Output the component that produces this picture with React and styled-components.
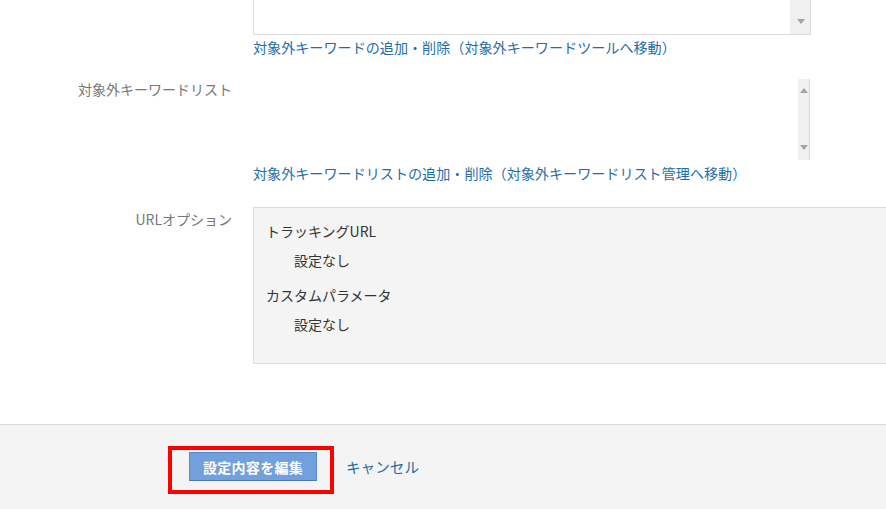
import React from "react";
import styled, { createGlobalStyle } from "styled-components";

const GlobalStyle = createGlobalStyle`
  html, body {
    margin: 0;
    padding: 0;
    background: #ffffff;
    overflow: hidden;
  }
  body {
    font-family: "Noto Sans CJK JP", "Noto Sans", sans-serif;
    font-size: 14px;
    color: #333333;
  }
`;

const Page = styled.div`
  width: 886px;
  height: 509px;
  overflow: hidden;
  display: flex;
  flex-direction: column;
`;

const Form = styled.div`
  display: flex;
  flex-direction: column;
  margin-top: -48px;
`;

const Row = styled.div`
  display: grid;
  grid-template-columns: 253px 1fr;
  margin-top: ${(props) => props.$gap || 0}px;
`;

const Label = styled.div`
  text-align: right;
  padding-right: 21px;
  padding-top: ${(props) => props.$top || 0}px;
  line-height: 20px;
  color: #777777;
  font-size: 14px;
`;

const Field = styled.div`
  display: flex;
  flex-direction: column;
  min-width: 0;
`;

const Textarea = styled.div`
  position: relative;
  width: 558px;
  height: ${(props) => props.$height}px;
  box-sizing: border-box;
  border: 1px solid ${(props) => (props.$bordered ? "#dcdcdc" : "transparent")};
  background: #ffffff;
  display: flex;
  justify-content: flex-end;
`;

const Scrollbar = styled.div`
  width: ${(props) => props.$width}px;
  background: #f0f0f0;
  border-left: 1px solid #f0f0f0;
  border-right: ${(props) => (props.$edge ? "1px solid #dcdcdc" : "none")};
  display: flex;
  flex-direction: column;
  justify-content: space-between;
  align-items: center;
  padding: 9px 0 10px;
  box-sizing: border-box;
`;

const Arrow = styled.span`
  width: 0;
  height: 0;
  border-left: 4px solid transparent;
  border-right: 4px solid transparent;
  ${(props) =>
    props.$up
      ? "border-bottom: 5px solid #a3a3a3;"
      : "border-top: 5px solid #a3a3a3;"}
  visibility: ${(props) => (props.$hidden ? "hidden" : "visible")};
`;

const Link = styled.a`
  display: block;
  color: #1f6ea9;
  font-size: 14.1px;
  line-height: 20px;
  margin-top: 2px;
  text-decoration: none;
  white-space: nowrap;
  cursor: pointer;
`;

const OptionBox = styled.div`
  box-sizing: border-box;
  margin-right: -10px;
  background: #f4f4f4;
  border: 1px solid #dcdcdc;
  padding: 13px 12px 29px;
  display: flex;
  flex-direction: column;
`;

const OptionTitle = styled.div`
  line-height: 20px;
  color: #333333;
  margin-top: ${(props) => (props.$first ? 0 : 15)}px;
`;

const OptionValue = styled.div`
  line-height: 20px;
  color: #333333;
  padding-left: 28px;
  margin-top: 9px;
`;

const Footer = styled.div`
  margin-top: 60px;
  flex: 1;
  background: #f4f4f4;
  border-top: 1px solid #d8d8d8;
  padding: 27px 0 0 189px;
  display: flex;
  align-items: flex-start;
  gap: 29px;
`;

const ButtonWrap = styled.div`
  position: relative;
`;

const Highlight = styled.div`
  position: absolute;
  left: -21px;
  top: -6px;
  width: 166px;
  height: 48px;
  box-sizing: border-box;
  border: 4px solid #ff0000;
  pointer-events: none;
`;

const PrimaryButton = styled.button`
  width: 128px;
  height: 29px;
  box-sizing: border-box;
  background: #71a0dc;
  border: 1px solid #5a87c6;
  border-bottom-color: #4d78b5;
  color: #ffffff;
  font-family: "Noto Sans CJK JP", sans-serif;
  font-weight: 700;
  font-size: 14px;
  letter-spacing: 0.3px;
  padding: 0;
  cursor: pointer;
`;

const CancelLink = styled.a`
  color: #1f6ea9;
  font-size: 14.6px;
  line-height: 29px;
  text-decoration: none;
  cursor: pointer;
`;

export default function App() {
  return (
    <Page>
      <GlobalStyle />
      <Form>
        <Row>
          <Label />
          <Field>
            <Textarea $height={83} $bordered>
              <Scrollbar $width={20}>
                <Arrow $up $hidden />
                <Arrow />
              </Scrollbar>
            </Textarea>
            <Link>対象外キーワードの追加・削除（対象外キーワードツールへ移動）</Link>
          </Field>
        </Row>
        <Row $gap={21}>
          <Label $top={1}>対象外キーワードリスト</Label>
          <Field>
            <Textarea $height={83}>
              <Scrollbar $width={12} $edge>
                <Arrow $up />
                <Arrow />
              </Scrollbar>
            </Textarea>
            <Link>対象外キーワードリストの追加・削除（対象外キーワードリスト管理へ移動）</Link>
          </Field>
        </Row>
        <Row $gap={24}>
          <Label $top={2}>URLオプション</Label>
          <OptionBox>
            <OptionTitle $first>トラッキングURL</OptionTitle>
            <OptionValue>設定なし</OptionValue>
            <OptionTitle>カスタムパラメータ</OptionTitle>
            <OptionValue>設定なし</OptionValue>
          </OptionBox>
        </Row>
      </Form>
      <Footer>
        <ButtonWrap>
          <PrimaryButton>設定内容を編集</PrimaryButton>
          <Highlight />
        </ButtonWrap>
        <CancelLink>キャンセル</CancelLink>
      </Footer>
    </Page>
  );
}
